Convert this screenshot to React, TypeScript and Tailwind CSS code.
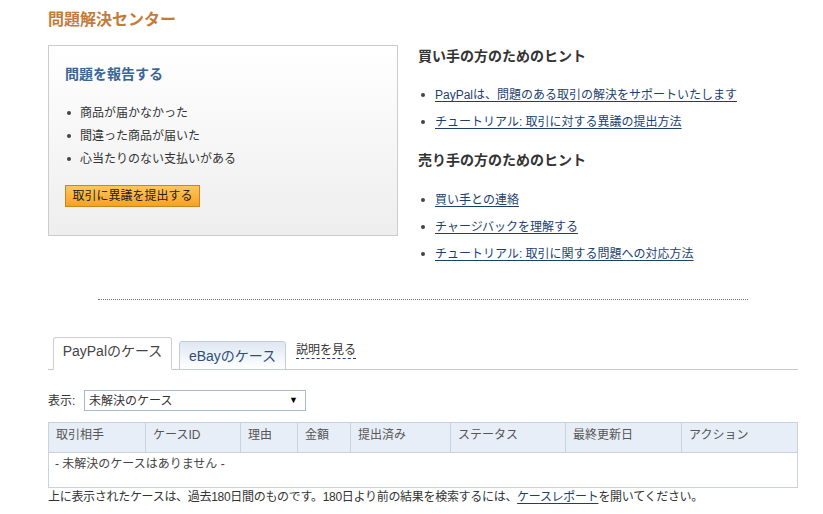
const jp = '[font-family:Arial,"Liberation_Sans","Noto_Sans_CJK_JP",sans-serif]';

const buyerLinks = [
  'PayPalは、問題のある取引の解決をサポートいたします',
  'チュートリアル: 取引に対する異議の提出方法',
];

const sellerLinks = [
  '買い手との連絡',
  'チャージバックを理解する',
  'チュートリアル: 取引に関する問題への対応方法',
];

const columns = [
  { label: '取引相手', w: 'w-[97px]' },
  { label: 'ケースID', w: 'w-[95px]' },
  { label: '理由', w: 'w-[57px]' },
  { label: '金額', w: 'w-[53px]' },
  { label: '提出済み', w: 'w-[100px]' },
  { label: 'ステータス', w: 'w-[115px]' },
  { label: '最終更新日', w: 'w-[116px]' },
  { label: 'アクション', w: 'flex-1' },
];

function LinkList({ items }: { items: string[] }) {
  return (
    <ul className="flex flex-col gap-[9px] pl-[3px]">
      {items.map((t) => (
        <li key={t} className="flex items-center h-[18px] text-[12px]">
          <span className="w-[4px] h-[4px] rounded-full bg-[#444] mr-[10px]" />
          <a href="#" className="text-[#1d3f6e] underline underline-offset-2">
            {t}
          </a>
        </li>
      ))}
    </ul>
  );
}

export default function App() {
  return (
    <div className={`${jp} bg-white w-[823px] h-[514px] overflow-hidden pl-[48px] text-[#333]`}>
      {/* Title */}
      <h1 className="h-[40px] pt-[9px] text-[16px] font-bold text-[#c37b3a] leading-[22px]">問題解決センター</h1>

      {/* Top section */}
      <div className="flex items-start gap-[20px] mt-[5px]">
        <div className="w-[350px] h-[191px] border border-[#cccccc] bg-gradient-to-b from-white to-[#eeeeee] pl-[16px] pt-[18px]">
          <h2 className="text-[14px] font-bold text-[#3a6593] leading-[20px]">問題を報告する</h2>
          <ul className="mt-[20px] flex flex-col gap-[5px] pl-[2px]">
            {['商品が届かなかった', '間違った商品が届いた', '心当たりのない支払いがある'].map((t) => (
              <li key={t} className="flex items-center h-[18px] text-[12px] text-[#333]">
                <span className="w-[4px] h-[4px] rounded-full bg-[#444] mr-[9px]" />
                {t}
              </li>
            ))}
          </ul>
          <button className="mt-[17px] h-[22px] w-[135px] border border-[#c9861e] bg-gradient-to-b from-[#ffc65a] to-[#f7a11d] text-[12px] text-[#222] leading-[20px]">
            取引に異議を提出する
          </button>
        </div>

        <div className="pt-[1px]">
          <h3 className="text-[14px] font-bold text-[#333] leading-[20px]">買い手の方のためのヒント</h3>
          <div className="mt-[20px]">
            <LinkList items={buyerLinks} />
          </div>
          <h3 className="mt-[19px] text-[14px] font-bold text-[#333] leading-[20px]">売り手の方のためのヒント</h3>
          <div className="mt-[21px]">
            <LinkList items={sellerLinks} />
          </div>
        </div>
      </div>

      {/* Dotted divider */}
      <div className="ml-[50px] mt-[36px] w-[650px] border-t border-dotted border-[#777]" />

      {/* Tabs */}
      <div className="mt-[37px] w-[750px] h-[33px] border-b border-[#c8c8c8] flex items-end pl-[5px]">
        <div className="h-[33px] w-[119px] -mb-px border border-[#cfcfcf] border-b-white bg-white rounded-t-[3px] text-[14px] text-[#444] flex items-center justify-center pb-[5px]">
          PayPalのケース
        </div>
        <div className="ml-[7px] h-[29px] w-[107px] border border-[#c4ccd8] bg-gradient-to-b from-[#dfe7f2] to-white rounded-t-[3px] text-[14px] text-[#2f4f7a] flex items-center justify-center pt-[1px] -mb-px">
          eBayのケース
        </div>
        <div className="ml-[10px] self-start mt-[5px] text-[12px] text-[#333] border-b border-dashed border-[#1d3f6e] leading-[16px]">
          説明を見る
        </div>
      </div>

      {/* Filter */}
      <div className="mt-[20px] flex items-center h-[21px] text-[12px]">
        <span className="w-[36px]">表示:</span>
        <div className="w-[222px] h-[21px] border border-[#a9b9cc] flex items-center justify-between pl-[4px] pr-[7px] bg-white">
          <span>未解決のケース</span>
          <span className="text-[9px] text-black">▼</span>
        </div>
      </div>

      {/* Table */}
      <div className="mt-[11px] w-[750px] border border-[#c9d3de] text-[12px]">
        <div className="flex h-[30px] bg-[#e8eef7] border-b border-[#c9d3de]">
          {columns.map((c, i) => (
            <div
              key={c.label}
              className={`${c.w} ${i < columns.length - 1 ? 'border-r border-[#c9d3de]' : ''} pl-[7px] pt-[3px] text-[#555]`}
            >
              {c.label}
            </div>
          ))}
        </div>
        <div className="h-[34px] pl-[6px] pt-[2px] text-[#444]">- 未解決のケースはありません -</div>
      </div>

      <p className="mt-[1px] text-[12px] text-[#333] leading-[16px] tracking-[-0.3px]">
        上に表示されたケースは、過去180日間のものです。180日より前の結果を検索するには、
        <a href="#" className="text-[#1d3f6e] underline underline-offset-2">ケースレポート</a>
        を開いてください。
      </p>
    </div>
  );
}
